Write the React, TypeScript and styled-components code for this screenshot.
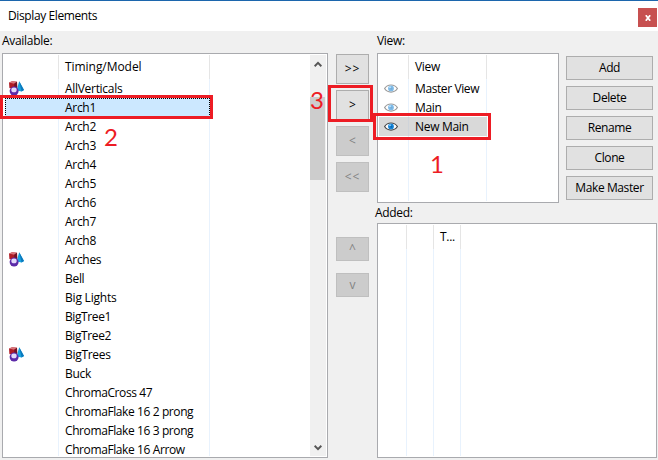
import React from "react";
import styled, { createGlobalStyle, css } from "styled-components";

const GlobalStyle = createGlobalStyle`
  * { box-sizing: border-box; }
  html, body { margin: 0; padding: 0; }
  body {
    width: 658px;
    height: 460px;
    overflow: hidden;
    background: #f0f0f0;
    color: #000;
    font: 12px/16px "Open Sans", "Noto Sans", sans-serif;
  }
`;

const Text = styled.span<{ $track?: number }>`
  letter-spacing: ${(p) => p.$track ?? -0.3}px;
  white-space: nowrap;
`;

const Dialog = styled.div`
  position: relative;
  width: 658px;
  height: 460px;
  overflow: hidden;
  border-top: 1px solid #1c66ad;
  background: #f0f0f0;
`;

const TitleBar = styled.header`
  display: flex;
  justify-content: space-between;
  align-items: flex-start;
  height: 30px;
  padding: 7px 1px 0 8px;
  background: #fff;
`;

const CloseButton = styled.button`
  display: flex;
  align-items: center;
  justify-content: center;
  width: 19px;
  height: 19px;
  padding: 0;
  border: 0;
  background: #c75050;
`;

const Body = styled.main`
  display: flex;
  height: 429px;
  padding-left: 2px;
`;

const Column = styled.section<{ $width: number; $gap: number }>`
  display: flex;
  flex: none;
  flex-direction: column;
  width: ${(p) => p.$width}px;
  margin-right: ${(p) => p.$gap}px;
`;

const Caption = styled.div<{ $height: number; $top: number; $left?: number }>`
  height: ${(p) => p.$height}px;
  padding-top: ${(p) => p.$top}px;
  margin-left: ${(p) => p.$left ?? 0}px;
`;

const ListFrame = styled.div<{ $height: number; $width?: number }>`
  display: flex;
  flex: none;
  width: ${(p) => (p.$width ? `${p.$width}px` : "100%")};
  height: ${(p) => p.$height}px;
  padding: 1px;
  border: 1px solid #a9aaae;
  background: #fff;
`;

const columnRules = (stops: number[], color: string) =>
  stops
    .map((x) => `linear-gradient(${color}, ${color}) ${x}px 0 / 1px 100% no-repeat`)
    .join(", ");

const ListContent = styled.div<{ $stops: number[] }>`
  flex: 1;
  min-width: 0;
  overflow: hidden;
  background: ${(p) => columnRules(p.$stops, "#e8f2fd")};
`;

const HeaderRow = styled.div<{ $stops: number[]; $indent: number }>`
  height: 24px;
  padding: 4px 0 0 ${(p) => p.$indent}px;
  background: ${(p) => columnRules(p.$stops, "#e5e5e5")}, #fff;
`;

const Row = styled.div<{ $width: number; $state?: "focused" | "inactive" }>`
  display: flex;
  align-items: center;
  width: ${(p) => p.$width}px;
  height: 19px;
  ${(p) =>
    p.$state === "inactive" &&
    css`
      background: linear-gradient(#cfd4da, #cfd4da) 29px 0 / 1px 100% no-repeat, #d9d9d9;
    `}
  ${(p) =>
    p.$state === "focused" &&
    css`
      margin-left: 1px;
      width: ${p.$width - 1}px;
      border: 1px dotted #000;
      background: #cce8ff;
    `}
`;

const IconCell = styled.span<{ $width: number; $pad: number }>`
  display: flex;
  flex: none;
  width: ${(p) => p.$width}px;
  padding-left: ${(p) => p.$pad}px;
`;

const ScrollBar = styled.div`
  display: flex;
  flex: none;
  flex-direction: column;
  align-items: center;
  width: 16px;
  background: #f0f0f0;
`;

const ScrollArrow = styled.div<{ $down?: boolean }>`
  height: 17px;
  padding-top: 6px;
  margin-right: 1px;
  line-height: 0;
`;

const ScrollTrack = styled.div`
  flex: 1;
  width: 100%;
  padding-top: 25px;
`;

const ScrollThumb = styled.div`
  width: 15px;
  height: 83px;
  background: #cdcdcd;
`;

const TransferColumn = styled.nav`
  display: flex;
  flex: none;
  flex-direction: column;
  gap: 6px;
  width: 33px;
  padding-top: 23px;
  margin-right: 8px;
`;

const OrderGroup = styled.div`
  display: flex;
  flex-direction: column;
  gap: 12px;
  margin-top: 39px;
`;

const Button = styled.button<{ $height: number }>`
  display: flex;
  flex: none;
  align-items: center;
  justify-content: center;
  width: 100%;
  height: ${(p) => p.$height}px;
  padding: 0;
  border: 1px solid #adadad;
  background: #e1e1e1;
  color: #000;
  font: inherit;
  &:disabled {
    border-color: #bfbfbf;
    background: #cccccc;
    color: #838383;
  }
`;

const ViewArea = styled.div`
  display: flex;
  gap: 7px;
`;

const ActionStack = styled.div`
  display: flex;
  flex-direction: column;
  gap: 6px;
  width: 87px;
  padding-top: 3px;
`;

const Marker = styled.div<{ $x: number; $y: number; $w: number; $h: number }>`
  position: absolute;
  left: ${(p) => p.$x}px;
  top: ${(p) => p.$y - 1}px;
  width: ${(p) => p.$w}px;
  height: ${(p) => p.$h}px;
  border: 3px solid #ed1c24;
`;

const StepNumber = styled.div<{ $x: number; $y: number }>`
  position: absolute;
  left: ${(p) => p.$x}px;
  top: ${(p) => p.$y - 1}px;
  color: #ed1c24;
  font: 24px/24px Lato, sans-serif;
`;

const ModelGroupIcon = () => (
  <svg width="15" height="15" viewBox="0 0 15 15">
    <path d="M10.2 0.2 15 9 12.6 10.6 7.5 9.4Z" fill="#18a4e0" />
    <path d="M10.2 0.2 15 9 12.6 10.6Z" fill="#0b78bc" />
    <path d="M0 1.5 3.2 0.2 8 0.8 8.2 6.6 5.4 8.6 0.4 7Z" fill="#b01c26" />
    <path d="M0 1.5 3.2 0.2 8 0.8 5.2 2.8Z" fill="#d9777c" />
    <path d="M5.2 2.8 8 0.8 8.2 6.6 5.4 8.6Z" fill="#701426" />
    <circle cx="5.1" cy="10.1" r="4.5" fill="#5c2aa8" />
    <ellipse cx="5" cy="8.9" rx="2.7" ry="2.4" fill="#e2d9fa" />
  </svg>
);

const EyeIcon = ({ dim }: { dim?: boolean }) => (
  <svg width="14" height="9" viewBox="0 0 14 9" opacity={dim ? 0.55 : 1}>
    <path d="M0.6 4.5C3.5-.2 10.5-.2 13.4 4.5 10.5 9.2 3.5 9.2.6 4.5Z" fill="#fff" stroke="#484848" strokeWidth="1.2" />
    <circle cx="7" cy="4.4" r="2.9" fill="#1685d8" />
    <circle cx="7.4" cy="4.7" r="1" fill="#0869b4" />
    <circle cx="6" cy="3.2" r="0.9" fill="#8dd2ff" />
  </svg>
);

const Chevron = ({ down }: { down?: boolean }) => (
  <svg width="8" height="6" viewBox="0 0 8 6">
    <path d={down ? "M.6.8 4 4.2 7.4.8" : "M.6 5.2 4 1.8 7.4 5.2"} fill="none" stroke="#555" strokeWidth="2" />
  </svg>
);

const models: { name: string; group?: boolean; track?: number }[] = [
  { name: "AllVerticals", group: true },
  { name: "Arch1" },
  { name: "Arch2" },
  { name: "Arch3" },
  { name: "Arch4" },
  { name: "Arch5" },
  { name: "Arch6" },
  { name: "Arch7" },
  { name: "Arch8" },
  { name: "Arches", group: true },
  { name: "Bell" },
  { name: "Big Lights", track: -0.2 },
  { name: "BigTree1", track: -0.4 },
  { name: "BigTree2", track: -0.4 },
  { name: "BigTrees", group: true },
  { name: "Buck" },
  { name: "ChromaCross 47", track: -0.4 },
  { name: "ChromaFlake 16 2 prong", track: -0.4 },
  { name: "ChromaFlake 16 3 prong", track: -0.4 },
  { name: "ChromaFlake 16 Arrow", track: -0.4 },
];

const views: { name: string; track?: number }[] = [
  { name: "Master View", track: -0.4 },
  { name: "Main" },
  { name: "New Main" },
];
const actions = ["Add", "Delete", "Rename", "Clone", "Make Master"];
const modelStops = [54, 205];
const viewStops = [29, 107];
const addedStops = [27, 54, 81];

export default function App() {
  return (
    <>
      <GlobalStyle />
      <Dialog>
        <TitleBar>
          <Text $track={-0.39}>Display Elements</Text>
          <CloseButton aria-label="Close">
            <svg width="6" height="6" viewBox="0 0 6 6">
              <path d="M.8.3 5.2 5.7M5.2.3.8 5.7" stroke="#fff" strokeWidth="1.8" />
            </svg>
          </CloseButton>
        </TitleBar>
        <Body>
          <Column $width={326} $gap={8}>
            <Caption $height={22} $top={2}><Text>Available:</Text></Caption>
            <ListFrame $height={405}>
              <ListContent $stops={modelStops}>
                <HeaderRow $stops={modelStops} $indent={61}><Text $track={-0.05}>Timing/Model</Text></HeaderRow>
                {models.map(({ name, group, track }) => {
                  const focused = name === "Arch1";
                  return (
                    <Row key={name} $width={206} $state={focused ? "focused" : undefined}>
                      <IconCell $width={focused ? 59 : 61} $pad={5}>{group && <ModelGroupIcon />}</IconCell>
                      <Text $track={track}>{name}</Text>
                    </Row>
                  );
                })}
              </ListContent>
              <ScrollBar>
                <ScrollArrow><Chevron /></ScrollArrow>
                <ScrollTrack><ScrollThumb /></ScrollTrack>
                <ScrollArrow><Chevron down /></ScrollArrow>
              </ScrollBar>
            </ListFrame>
          </Column>
          <TransferColumn>
            <Button $height={30}><Text $track={1}>&gt;&gt;</Text></Button>
            <Button $height={30}>&gt;</Button>
            <Button $height={30} disabled>&lt;</Button>
            <Button $height={30} disabled><Text $track={1}>&lt;&lt;</Text></Button>
            <OrderGroup>
              <Button $height={24} disabled>^</Button>
              <Button $height={24} disabled>v</Button>
            </OrderGroup>
          </TransferColumn>
          <Column $width={280} $gap={0}>
            <Caption $height={22} $top={2}><Text>View:</Text></Caption>
            <ViewArea>
              <ListFrame $width={182} $height={150}>
                <ListContent $stops={viewStops}>
                  <HeaderRow $stops={viewStops} $indent={36}><Text>View</Text></HeaderRow>
                  {views.map(({ name, track }) => {
                    const selected = name === "New Main";
                    return (
                      <Row key={name} $width={108} $state={selected ? "inactive" : undefined}>
                        <IconCell $width={36} $pad={5}><EyeIcon dim={!selected} /></IconCell>
                        <Text $track={track}>{name}</Text>
                      </Row>
                    );
                  })}
                </ListContent>
              </ListFrame>
              <ActionStack>
                {actions.map((name) => (
                  <Button key={name} $height={24}><Text $track={-0.4}>{name}</Text></Button>
                ))}
              </ActionStack>
            </ViewArea>
            <Caption $height={20} $top={2} $left={-2}><Text>Added:</Text></Caption>
            <ListFrame $height={235}>
              <ListContent $stops={addedStops}>
                <HeaderRow $stops={addedStops} $indent={61}><Text>T...</Text></HeaderRow>
              </ListContent>
            </ListFrame>
          </Column>
        </Body>
        <Marker $x={0} $y={95} $w={213} $h={24} />
        <Marker $x={328} $y={85} $w={45} $h={37} />
        <Marker $x={373} $y={113} $w={118} $h={27} />
        <StepNumber $x={430} $y={152}>1</StepNumber>
        <StepNumber $x={104} $y={125}>2</StepNumber>
        <StepNumber $x={310} $y={88}>3</StepNumber>
      </Dialog>
    </>
  );
}
